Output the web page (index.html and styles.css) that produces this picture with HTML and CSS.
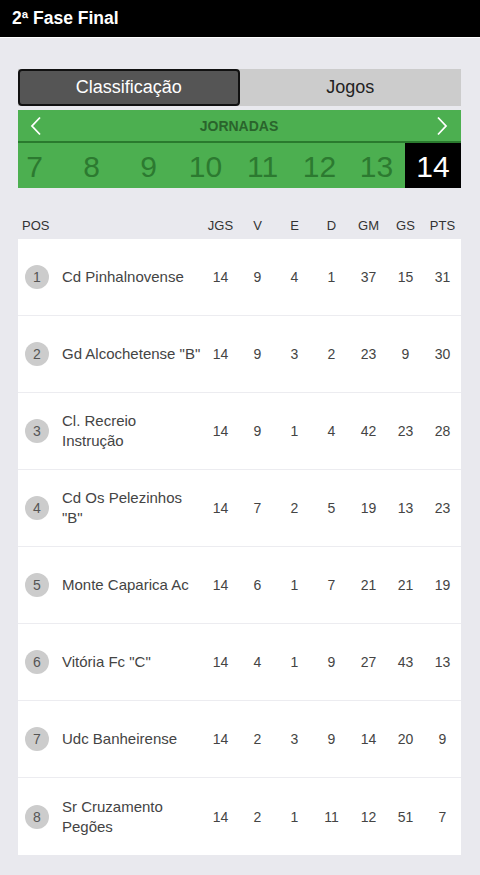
FILE: index.html
```html
<!DOCTYPE html>
<html>
<head>
<meta charset="utf-8">
<link rel="stylesheet" href="styles.css">
</head>
<body>
<header class="topbar">2ª Fase Final</header>
<main class="content">
  <div class="tabs">
    <div class="tab active">Classificação</div>
    <div class="tab">Jogos</div>
  </div>
  <div class="rounds">
    <div class="rounds-head">
      <svg class="arrow" viewBox="0 0 12 20" width="12" height="20"><path d="M10 1.5 L2 10 L10 18.5" fill="none" stroke="#fff" stroke-width="1.8"/></svg>
      <span class="rounds-title">JORNADAS</span>
      <svg class="arrow" viewBox="0 0 12 20" width="12" height="20"><path d="M2 1.5 L10 10 L2 18.5" fill="none" stroke="#fff" stroke-width="1.8"/></svg>
    </div>
    <div class="rounds-strip">
      <div class="round">7</div>
      <div class="round">8</div>
      <div class="round">9</div>
      <div class="round">10</div>
      <div class="round">11</div>
      <div class="round">12</div>
      <div class="round">13</div>
      <div class="round current">14</div>
    </div>
  </div>
  <div class="table">
    <div class="row head">
      <div class="c-pos">POS</div><div class="c-team"></div>
      <div class="c">JGS</div><div class="c">V</div><div class="c">E</div><div class="c">D</div><div class="c">GM</div><div class="c">GS</div><div class="c">PTS</div>
    </div>
    <div class="body">
      <div class="row"><div class="c-pos"><span class="badge">1</span></div><div class="c-team">Cd Pinhalnovense</div><div class="c">14</div><div class="c">9</div><div class="c">4</div><div class="c">1</div><div class="c">37</div><div class="c">15</div><div class="c">31</div></div>
      <div class="row"><div class="c-pos"><span class="badge">2</span></div><div class="c-team">Gd Alcochetense "B"</div><div class="c">14</div><div class="c">9</div><div class="c">3</div><div class="c">2</div><div class="c">23</div><div class="c">9</div><div class="c">30</div></div>
      <div class="row"><div class="c-pos"><span class="badge">3</span></div><div class="c-team">Cl. Recreio Instrução</div><div class="c">14</div><div class="c">9</div><div class="c">1</div><div class="c">4</div><div class="c">42</div><div class="c">23</div><div class="c">28</div></div>
      <div class="row"><div class="c-pos"><span class="badge">4</span></div><div class="c-team">Cd Os Pelezinhos "B"</div><div class="c">14</div><div class="c">7</div><div class="c">2</div><div class="c">5</div><div class="c">19</div><div class="c">13</div><div class="c">23</div></div>
      <div class="row"><div class="c-pos"><span class="badge">5</span></div><div class="c-team">Monte Caparica Ac</div><div class="c">14</div><div class="c">6</div><div class="c">1</div><div class="c">7</div><div class="c">21</div><div class="c">21</div><div class="c">19</div></div>
      <div class="row"><div class="c-pos"><span class="badge">6</span></div><div class="c-team">Vitória Fc "C"</div><div class="c">14</div><div class="c">4</div><div class="c">1</div><div class="c">9</div><div class="c">27</div><div class="c">43</div><div class="c">13</div></div>
      <div class="row"><div class="c-pos"><span class="badge">7</span></div><div class="c-team">Udc Banheirense</div><div class="c">14</div><div class="c">2</div><div class="c">3</div><div class="c">9</div><div class="c">14</div><div class="c">20</div><div class="c">9</div></div>
      <div class="row"><div class="c-pos"><span class="badge">8</span></div><div class="c-team">Sr Cruzamento Pegões</div><div class="c">14</div><div class="c">2</div><div class="c">1</div><div class="c">11</div><div class="c">12</div><div class="c">51</div><div class="c">7</div></div>
    </div>
  </div>
</main>
</body>
</html>
```

FILE: styles.css
```css
* { box-sizing: border-box; }
html, body { margin: 0; padding: 0; }
body {
  background: #e9e9ee;
  font-family: "Liberation Sans", Arial, sans-serif;
  color: #444;
  width: 480px;
  min-height: 875px;
}
.topbar {
  background: #000;
  color: #fff;
  font-weight: bold;
  font-size: 17.5px;
  height: 38px;
  line-height: 36px;
  padding-left: 12px;
  border-bottom: 1px solid #fff;
}
.content {
  padding: 31px 19px 20px 18px;
}
.tabs {
  display: flex;
  height: 37px;
  background: #cccccc;
}
.tab {
  width: 50%;
  flex: none;
  display: flex;
  align-items: center;
  justify-content: center;
  font-size: 18px;
  color: #222;
}
.tab.active {
  background: #555;
  color: #fff;
  border: 2px solid #111;
  border-radius: 4px;
}
.rounds {
  margin-top: 4px;
  background: #4caf50;
}
.rounds-head {
  height: 33px;
  display: flex;
  align-items: center;
  justify-content: space-between;
  padding: 0 13px 0 12px;
  border-bottom: 2px solid #2a7a2e;
}
.rounds-title {
  font-weight: bold;
  font-size: 14px;
  color: #2a642c;
}
.rounds-strip {
  display: flex;
  justify-content: flex-end;
  overflow: hidden;
  height: 45px;
}
.round {
  flex: 0 0 57px;
  display: flex;
  align-items: center;
  justify-content: center;
  font-size: 30px;
  color: #2c7a30;
  padding-top: 2px;
}
.round.current {
  background: #000;
  color: #fff;
  flex-basis: 56px;
}
.table {
  margin-top: 25px;
}
.row {
  display: flex;
  align-items: center;
}
.row.head {
  height: 26px;
  font-size: 13px;
  color: #333;
  padding-bottom: 2px;
}
.row.head .c-pos { padding-left: 4px; }
.body {
  background: #fff;
}
.body .row {
  height: 77px;
  border-bottom: 1px solid #ececf0;
  font-size: 14px;
}
.body .row:last-child { border-bottom: none; }
.c-pos {
  width: 44px;
  padding-left: 7px;
}
.c-team {
  width: 140px;
  font-size: 15px;
  line-height: 20px;
  color: #444;
}
.c {
  width: 37px;
  text-align: center;
  color: #444;
}
.row.head .c { color: #333; }
.badge {
  display: inline-flex;
  width: 24px;
  height: 24px;
  border-radius: 50%;
  background: #cccccc;
  color: #555;
  align-items: center;
  justify-content: center;
  font-size: 14px;
}
```
